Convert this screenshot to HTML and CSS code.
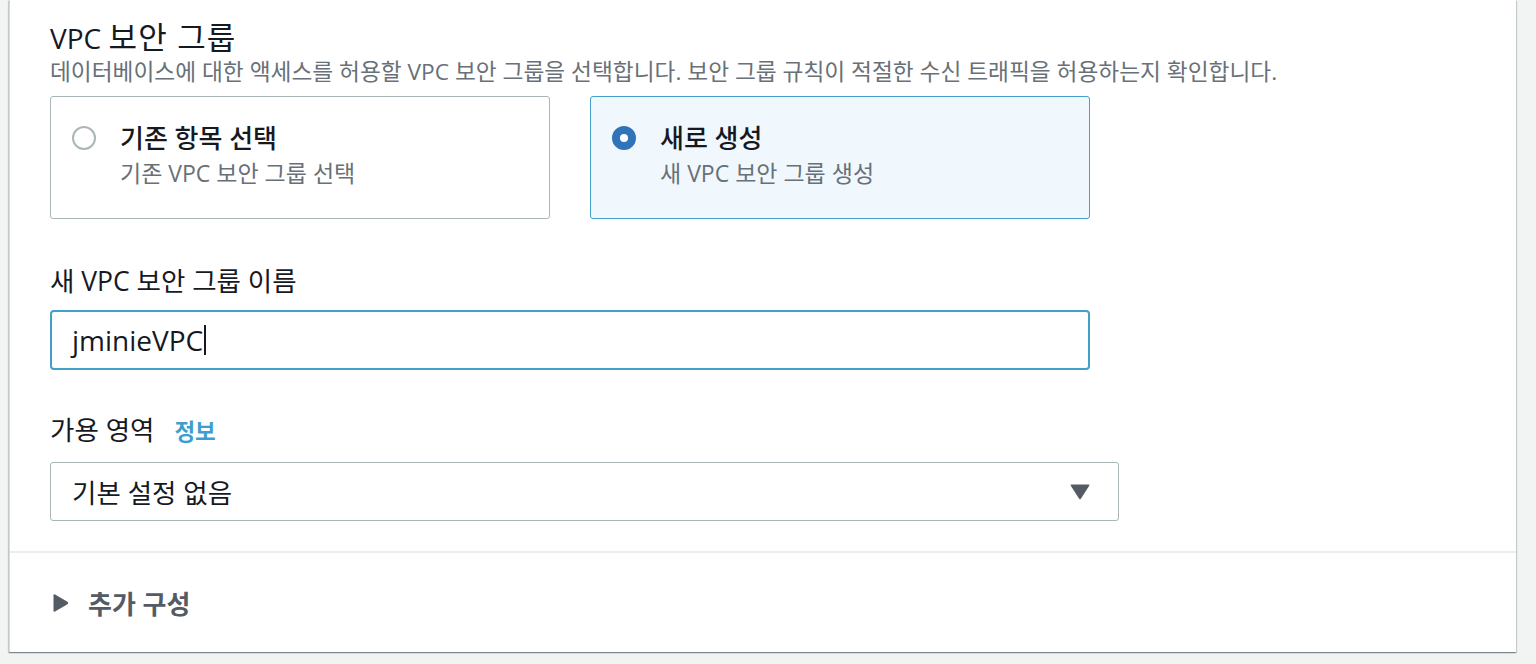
FILE: index.html
```html
<!DOCTYPE html>
<html lang="ko">
<head>
<meta charset="utf-8">
<link rel="stylesheet" href="styles.css">
</head>
<body>
<div class="page">
  <div class="panel">
    <div class="fields">
      <div class="section-title">VPC <span class="title-ko">보안 그룹</span></div>
      <div class="section-desc">데이터베이스에 대한 액세스를 허용할 VPC 보안 그룹을 선택합니다. 보안 그룹 규칙이 적절한 수신 트래픽을 허용하는지 확인합니다.</div>
      <div class="tiles">
        <div class="tile">
          <span class="radio"></span>
          <div class="tile-text">
            <div class="tile-title">기존 항목 선택</div>
            <div class="tile-sub">기존 VPC 보안 그룹 선택</div>
          </div>
        </div>
        <div class="tile tile-selected">
          <span class="radio radio-checked"></span>
          <div class="tile-text">
            <div class="tile-title">새로 생성</div>
            <div class="tile-sub">새 VPC 보안 그룹 생성</div>
          </div>
        </div>
      </div>

      <div class="field-label label-name">새 VPC 보안 그룹 이름</div>
      <div class="input input-focused"><span class="input-value">jminieVPC</span><span class="caret-line"></span></div>

      <div class="field-label label-az"><span>가용 영역</span><a class="info">정보</a></div>
      <div class="select">
        <span class="select-value">기본 설정 없음</span>
        <svg class="select-arrow" width="22" height="17" viewBox="0 0 22 17"><path d="M2.5 1.5 H19.5 Q21 1.5 20.2 2.8 L12.2 15.3 Q11 17 9.8 15.3 L1.8 2.8 Q1 1.5 2.5 1.5 Z" fill="#545b64"/></svg>
      </div>
    </div>
    <div class="expander">
      <svg class="expander-icon" width="17" height="20" viewBox="0 0 17 20"><path d="M1.5 2.2 Q1.5 0.6 3 1.4 L15.5 8.8 Q17 10 15.5 11.2 L3 18.6 Q1.5 19.4 1.5 17.8 Z" fill="#545b64"/></svg>
      <span class="expander-label">추가 구성</span>
    </div>
  </div>
</div>
</body>
</html>
```

FILE: styles.css
```css
html, body {
  margin: 0;
  padding: 0;
  background: #f2f3f3;
  font-family: "Open Sans", "Noto Sans CJK KR", sans-serif;
  color: #16191f;
}

.page {
  width: 1536px;
  height: 664px;
  padding: 0 20px 12px 9px;
  box-sizing: border-box;
  display: flex;
  flex-direction: column;
}

.panel {
  flex: 1;
  background: #fff;
  border-left: 1px solid #d5dbdb;
  box-shadow: 0 1px 1px 0 rgba(0, 28, 36, 0.3), 1px 1px 1px 0 rgba(0, 28, 36, 0.15), -1px 1px 1px 0 rgba(0, 28, 36, 0.15);
  display: flex;
  flex-direction: column;
}

.fields {
  padding: 21px 0 30px 40px;
}

.section-title {
  font-size: 28px;
  line-height: 32px;
  height: 32px;
  font-weight: 500;
}

.title-ko {
  font-size: 31px;
  line-height: 32px;
  font-weight: 400;
  letter-spacing: 1.2px;
}

.section-desc {
  margin-top: 5px;
  font-size: 22.7px;
  line-height: 28px;
  color: #687078;
  white-space: nowrap;
}

.tiles {
  margin-top: 10px;
  display: flex;
  gap: 40px;
}

.tile {
  width: 500px;
  height: 123px;
  box-sizing: border-box;
  border: 1px solid #aab7b8;
  border-radius: 3px;
  padding: 19px 21px 0;
  display: flex;
  align-items: flex-start;
  gap: 24px;
}

.tile-selected {
  border-color: #44a0c9;
  background: #f1f8fd;
}

.radio {
  flex: none;
  width: 24px;
  height: 24px;
  box-sizing: border-box;
  border: 2px solid #aab7b8;
  border-radius: 50%;
  margin-top: 10px;
  background: #fff;
}

.radio-checked {
  border: 8px solid #3173b8;
  background: #fff;
}

.tile-title {
  font-size: 26px;
  line-height: 44px;
  font-weight: 500;
}

.tile-sub {
  font-size: 23px;
  line-height: 26px;
  color: #687078;
}

.field-label {
  font-size: 26.5px;
  line-height: 32px;
  height: 32px;
}

.label-name {
  margin-top: 46px;
}

.label-az {
  margin-top: 44px;
  display: flex;
  align-items: baseline;
  gap: 20px;
}

.info {
  font-size: 22.5px;
  font-weight: 700;
  color: #3e9fce;
}

.input {
  margin-top: 13px;
  width: 1040px;
  height: 60px;
  box-sizing: border-box;
  border: 2px solid #44a0c9;
  border-radius: 4px;
  padding: 0 20px;
  display: flex;
  align-items: center;
  font-size: 28px;
}

.caret-line {
  width: 1.5px;
  height: 30px;
  background: #16191f;
  margin-left: 1px;
}

.select {
  margin-top: 16px;
  width: 1069px;
  height: 59px;
  box-sizing: border-box;
  border: 1px solid #aab7b8;
  border-radius: 3px;
  padding: 0 27px 0 21px;
  display: flex;
  align-items: center;
  justify-content: space-between;
  font-size: 26.5px;
}

.select-arrow {
  display: block;
}

.expander {
  flex: 1;
  border-top: 2px solid #eaeded;
  display: flex;
  align-items: center;
  padding-left: 42px;
  gap: 19px;
}

.expander-icon {
  display: block;
}

.expander-label {
  font-size: 26px;
  font-weight: 700;
  color: #545b64;
}
```
